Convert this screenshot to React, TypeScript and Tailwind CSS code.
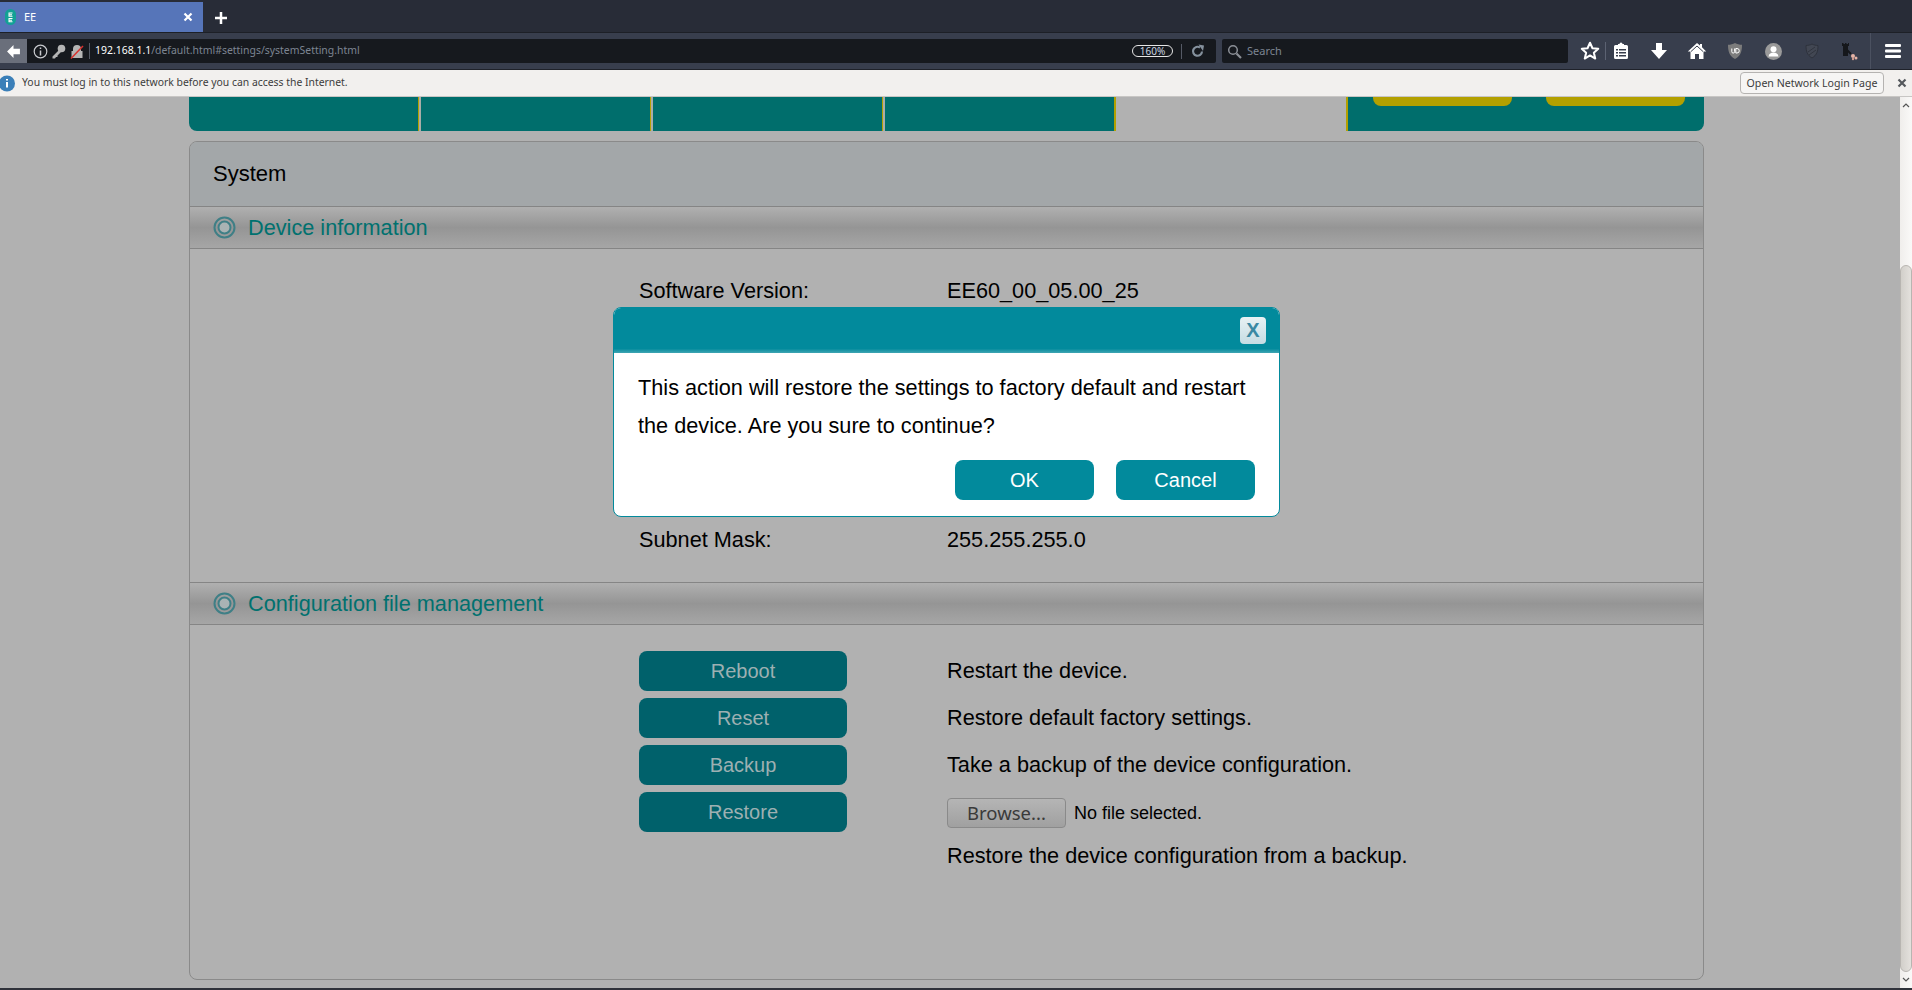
import React from "react";

const ui = { fontFamily: '"Noto Sans", "DejaVu Sans", sans-serif' };
const page = { fontFamily: '"Liberation Sans", Arial, sans-serif' };

function Ring() {
  return (
    <svg width="23" height="23" viewBox="0 0 23 23" className="shrink-0">
      <circle cx="11.5" cy="11.5" r="10" fill="none" stroke="#3f7f86" strokeWidth="2" />
      <circle cx="11.5" cy="11.5" r="6" fill="#a9b3b4" stroke="#3f7f86" strokeWidth="2" />
    </svg>
  );
}

function SectionHead({ title }: { title: string }) {
  return (
    <div className="h-[43px] flex items-center gap-[12px] pl-[23px] border-y border-[#858585] bg-[linear-gradient(180deg,#b0b0b0_0%,#959595_50%,#a6a6a6_100%)]">
      <Ring />
      <span className="pt-[1px] text-[21.7px] text-[#00716f]">{title}</span>
    </div>
  );
}

function ActionRow({ label, text }: { label: string; text: string }) {
  return (
    <div className="flex items-center h-[40px] mb-[7px]">
      <button className="w-[208px] h-[40px] rounded-lg bg-[#00616b] text-[20px] text-[#9db0b2]">{label}</button>
      <span className="ml-[100px] text-[21.7px] text-black">{text}</span>
    </div>
  );
}

function ToolbarIcons() {
  return (
    <div className="flex items-center h-full">
      <svg width="22" height="22" viewBox="0 0 24 24" className="ml-[11px]">
        <path d="M12 3l2.7 6 6.3.6-4.8 4.2 1.5 6.4L12 16.8 6.3 20.2l1.5-6.4L3 9.6 9.3 9z" fill="none" stroke="#fff" strokeWidth="2.2" strokeLinejoin="round" />
      </svg>
      <div className="w-px h-[18px] bg-[#5c6272] ml-[4px]" />
      <svg width="18" height="20" viewBox="0 0 18 20" className="ml-[6px]">
        <path d="M6 3h1.5a1.5 1.5 0 0 1 3 0H12v1h2.5A1.5 1.5 0 0 1 16 5.5v11a1.5 1.5 0 0 1-1.5 1.5h-11A1.5 1.5 0 0 1 2 16.5v-11A1.5 1.5 0 0 1 3.500 4H6z" fill="#fff" />
        <path d="M4 8h2v1.500H4zM7 8h7v1.500H7zM4 11h2v1.500H4zM7 11h7v1.500H7zM4 14h2v1.500H4zM7 14h7v1.500H7z" fill="#383e4d" />
      </svg>
      <svg width="18" height="18" viewBox="0 0 18 18" className="ml-[20px]">
        <path d="M6 1h6v7h5l-8 9-8-9h5z" fill="#fff" />
      </svg>
      <svg width="20" height="18" viewBox="0 0 20 18" className="ml-[19px]">
        <path d="M10 1L0.800 9.500h2.700V17h4.500v-5h4v5h4.500V9.500h2.700L15 5.200V2h-2v1.400z" fill="#fff" />
        <path d="M10 4l-6 5.500" stroke="#383e4d" strokeWidth="1" />
        <path d="M10 4l6 5.500" stroke="#383e4d" strokeWidth="1" />
      </svg>
      <svg width="16" height="18" viewBox="0 0 16 18" className="ml-[20px]">
        <path d="M8 1c2 1.200 4.500 1.700 7 1.800 0 6-1 11-7 14.200C2 13.800 1 8.800 1 2.800 3.500 2.700 6 2.200 8 1z" fill="#7c7c7c" />
        <path d="M4.800 6.500v3.200a1.400 1.400 0 0 0 2.800 0V6.500M8.800 6.500v4.500h1.200a2.250 2.250 0 0 0 0-4.500z" fill="none" stroke="#fff" strokeWidth="1" />
      </svg>
      <svg width="17" height="17" viewBox="0 0 17 17" className="ml-[22px]">
        <circle cx="8.500" cy="8.500" r="8.500" fill="#9a9a9a" />
        <circle cx="8.500" cy="6.200" r="3" fill="#fff" />
        <path d="M3.500 13.500c.5-3 2.500-4 5-4s4.500 1 5 4z" fill="#fff" />
      </svg>
      <svg width="14" height="16" viewBox="0 0 14 16" className="ml-[23px]">
        <path d="M7 1c1.800 1 3.800 1.400 6 1.500 0 5.500-1 9.500-6 12.500C2 12 1 8 1 2.500 3.200 2.400 5.200 2 7 1z" fill="#424753" stroke="#2e323c" strokeWidth="1" />
        <path d="M3 9l7-5M4 12l7-5" stroke="#30343e" strokeWidth="1" />
      </svg>
      <svg width="17" height="20" viewBox="0 0 17 20" className="ml-[22px]">
        <path d="M1 2h1.500v1H4V2h1.500v1H7V2h1v3H7v10H2V5H1z" fill="#15171b" />
        <path d="M6 9l4 4" stroke="#15171b" strokeWidth="2" />
        <circle cx="12" cy="15" r="2" fill="#e5b3a5" />
        <circle cx="15" cy="17" r="1.500" fill="#e5b3a5" />
        <circle cx="12" cy="18" r="1.200" fill="#cf9c90" />
      </svg>
      <div className="w-px h-full bg-[#4b5160] ml-[12px]" />
      <svg width="16" height="14" viewBox="0 0 16 14" className="ml-[14px]">
        <rect y="0" width="16" height="3" rx="1" fill="#fff" />
        <rect y="5.500" width="16" height="3" rx="1" fill="#fff" />
        <rect y="11" width="16" height="3" rx="1" fill="#fff" />
      </svg>
    </div>
  );
}

function Browser() {
  return (
    <div style={ui} className="shrink-0">
      <div className="h-[33px] bg-[#282c37] pt-[2px] flex border-b border-[#1d2027]">
        <div className="w-[203px] h-full bg-[#5675b9] flex items-center relative">
          <svg width="11" height="16" viewBox="0 0 11 16" className="ml-[5px]">
            <rect width="11" height="16" rx="5.500" fill="#12a195" />
            <path d="M3.500 3.500h4v1h-3v.7h2.500v1H4.500v.6h3v1h-4zM3.500 9h4v1h-3v.7h2.500v1H4.500v.6h3v1h-4z" fill="#fff" />
          </svg>
          <span className="ml-[8px] text-[11px] text-white">EE</span>
          <svg width="10" height="10" viewBox="0 0 10 10" className="ml-auto mr-[10px]">
            <path d="M1.500 1.500l7 7M8.500 1.500l-7 7" stroke="#fff" strokeWidth="2.200" />
          </svg>
        </div>
        <svg width="14" height="14" viewBox="0 0 14 14" className="ml-[11px] mt-[9px]">
          <path d="M7 1v12M1 7h12" stroke="#fff" strokeWidth="2.500" />
        </svg>
      </div>
      <div className="h-[37px] bg-[#383e4d] flex items-center border-b border-[#1f222a]">
        <div className="w-[27px] h-[24px] bg-[#6a6f7b] flex items-center justify-center">
          <svg width="15" height="15" viewBox="0 0 14 14">
            <path d="M7 1L1 7l6 6V9.500h6v-5H7z" fill="#fff" />
          </svg>
        </div>
        <div className="w-[1189px] h-[24px] bg-[#16191e] rounded-r-[2px] flex items-center">
          <svg width="15" height="15" viewBox="0 0 15 15" className="ml-[6px]">
            <circle cx="7.500" cy="7.500" r="6.300" fill="none" stroke="#c9cbcf" strokeWidth="1.200" />
            <path d="M7.500 6.500v5M7.500 3.500v1.600" stroke="#c9cbcf" strokeWidth="1.500" />
          </svg>
          <svg width="15" height="15" viewBox="0 0 15 15" className="ml-[3px]">
            <circle cx="10.500" cy="4.500" r="3.800" fill="#b5b5b5" />
            <path d="M8 6L1.500 12.500V14.500h2.500l1-1.500h1.500V11.500L10 8z" fill="#b5b5b5" />
          </svg>
          <svg width="14" height="15" viewBox="0 0 14 15" className="ml-[4px]">
            <path d="M3 7V5a4 4 0 0 1 8 0v2h1.500v7h-11V7z" fill="#b5b5b5" />
            <path d="M1 14.500L13 2" stroke="#d8322e" strokeWidth="1.500" />
          </svg>
          <div className="w-px h-[16px] bg-[#555a66] ml-[5px]" />
          <span className="ml-[5px] text-[10.450px] text-white whitespace-nowrap">192.168.1.1<span className="text-[#7d8592]">/default.html#settings/systemSetting.html</span></span>
          <div className="ml-auto w-[41px] h-[12px] rounded-full border border-[#e6e6e6] text-[10px] leading-[10px] text-center text-[#c7d3e0]">160%</div>
          <div className="w-px h-[15px] bg-[#555a66] ml-[8px]" />
          <svg width="14" height="14" viewBox="0 0 14 14" className="ml-[9px] mr-[11px]">
            <path d="M11 7.500A4.500 4.500 0 1 1 9 3.500" fill="none" stroke="#85919d" strokeWidth="2.200" />
            <path d="M7.500 0.500l5.500 1-1 5.500z" fill="#85919d" />
          </svg>
        </div>
        <div className="w-[346px] h-[24px] bg-[#16191e] rounded-[2px] ml-[6px] flex items-center">
          <svg width="15" height="15" viewBox="0 0 15 15" className="ml-[5px]">
            <circle cx="6" cy="6" r="4.300" fill="none" stroke="#8b8f96" strokeWidth="1.500" />
            <path d="M9.500 9.500l4.500 4.500" stroke="#8b8f96" strokeWidth="2.200" />
          </svg>
          <span className="ml-[5px] text-[11px] text-[#7d8592]">Search</span>
        </div>
        <ToolbarIcons />
      </div>
      <div className="h-[27px] bg-[#f2f0ee] border-b border-[#c8c6c4] flex items-center">
        <svg width="16" height="17" viewBox="0 0 16 16">
          <circle cx="7" cy="8" r="8" fill="#3b7fb8" />
          <path d="M7 6.500v5.500M7 3.500v1.500" stroke="#fff" strokeWidth="2" />
        </svg>
        <span className="ml-[6px] text-[10.400px] text-[#3c3c3c]">You must log in to this network before you can access the Internet.</span>
        <div className="ml-auto w-[144px] h-[22px] rounded-[4px] border border-[#b5b3b1] bg-[#f6f5f4] text-[10.600px] leading-[20px] text-center text-[#3c3c3c]">Open Network Login Page</div>
        <svg width="10" height="10" viewBox="0 0 10 10" className="ml-[13px] mr-[5px]">
          <path d="M1.500 1.500l7 7M8.500 1.500l-7 7" stroke="#55585c" strokeWidth="2.200" />
        </svg>
      </div>
    </div>
  );
}

function Nav() {
  return (
    <div className="h-[34px] flex">
      <div className="w-[230px] bg-[#006e6c] rounded-bl-lg border-r border-[#b3a000]" />
      <div className="w-[2px] bg-[#a9ada8]" />
      <div className="w-[230px] bg-[#006e6c] border-r border-[#b3a000]" />
      <div className="w-[2px] bg-[#a9ada8]" />
      <div className="w-[230px] bg-[#006e6c] border-r border-[#b3a000]" />
      <div className="w-[2px] bg-[#a9ada8]" />
      <div className="w-[231px] bg-[#006e6c] border-r-2 border-[#b3a000]" />
      <div className="w-[230px]" />
      <div className="w-[358px] bg-[#006e6c] border-l-2 border-[#b3a000] rounded-br-lg flex gap-[34px] pl-[25px]">
        <div className="w-[139px] h-[9px] bg-[#b3a000] rounded-b-lg" />
        <div className="w-[139px] h-[9px] bg-[#b3a000] rounded-b-lg" />
      </div>
    </div>
  );
}

function Panel() {
  return (
    <div className="mt-[10px] h-[839px] border border-[#8a8a8a] rounded-lg overflow-hidden">
      <div className="h-[64px] flex items-center pl-[23px] pb-[2px] bg-[#a3a7a9] text-[22px] text-black">System</div>
      <SectionHead title="Device information" />
      <div className="h-[333px] pl-[449px] pt-[28px] text-[21.7px] text-black">
        <div className="flex h-[28px] items-center">
          <span className="w-[308px]">Software Version:</span>
          <span>EE60_00_05.00_25</span>
        </div>
        <div className="h-[221px]" />
        <div className="flex h-[28px] items-center">
          <span className="w-[308px]">Subnet Mask:</span>
          <span>255.255.255.0</span>
        </div>
      </div>
      <SectionHead title="Configuration file management" />
      <div className="pl-[449px] pt-[26px]">
        <ActionRow label="Reboot" text="Restart the device." />
        <ActionRow label="Reset" text="Restore default factory settings." />
        <ActionRow label="Backup" text="Take a backup of the device configuration." />
        <div className="flex">
          <button className="w-[208px] h-[40px] rounded-lg bg-[#00616b] text-[20px] text-[#9db0b2]">Restore</button>
          <div className="ml-[100px]">
            <div className="flex items-center h-[40px] pt-[2px]">
              <div style={ui} className="w-[119px] h-[30px] rounded-[4px] border border-[#8a8a8a] bg-[linear-gradient(180deg,#b5b5b5,#a0a0a0)] text-[18.500px] leading-[28px] text-center text-[#3a3a3a]">Browse...</div>
              <span className="ml-[8px] text-[18px] text-black">No file selected.</span>
            </div>
            <div className="mt-[8px] text-[21.7px] text-black">Restore the device configuration from a backup.</div>
          </div>
        </div>
      </div>
    </div>
  );
}

function Dialog() {
  return (
    <div className="absolute left-[613px] top-[210px] w-[667px] h-[210px] rounded-lg bg-white border border-[#028a9c] overflow-hidden">
      <div className="h-[45px] bg-[linear-gradient(180deg,#028a9c_0%,#028a9c_90%,#3fa5b3_100%)] flex items-start justify-end pr-[13px] pt-[9px]">
        <div className="w-[26px] h-[27px] rounded-[4px] bg-[linear-gradient(180deg,#e8f2f4,#c5dce3)] text-[#3a89a3] font-bold text-[20px] leading-[27px] text-center">X</div>
      </div>
      <div className="pl-[24px] pr-[25px] pt-[16px] text-[21.7px] leading-[38px] text-black">
        This action will restore the settings to factory default and restart the device. Are you sure to continue?
      </div>
      <div className="flex justify-end gap-[22px] pr-[24px] mt-[15px]">
        <button className="w-[139px] h-[40px] rounded-lg bg-[#028a9c] text-white text-[20px]">OK</button>
        <button className="w-[139px] h-[40px] rounded-lg bg-[#028a9c] text-white text-[20px]">Cancel</button>
      </div>
    </div>
  );
}

function Scrollbar() {
  return (
    <div className="w-[12px] h-full bg-[linear-gradient(90deg,#f0eeec,#faf9f8)] flex flex-col items-center">
      <svg width="8" height="5" viewBox="0 0 8 5" className="mt-[6px]">
        <path d="M1 4l3-3 3 3" fill="none" stroke="#555" strokeWidth="1.200" />
      </svg>
      <div className="mt-[157px] w-full h-[707px] rounded-full border border-[#b8b5b1] bg-[linear-gradient(90deg,#d2cfca,#e4e1dd)]" />
      <svg width="8" height="5" viewBox="0 0 8 5" className="mt-[5px]">
        <path d="M1 1l3 3 3-3" fill="none" stroke="#555" strokeWidth="1.200" />
      </svg>
    </div>
  );
}

export default function App() {
  return (
    <div className="w-[1912px] h-[990px] overflow-hidden flex flex-col bg-[#b1b1b1]">
      <Browser />
      <div style={page} className="relative flex-1 flex min-h-0">
        <div className="flex-1 pl-[189px] pr-[196px]">
          <Nav />
          <Panel />
        </div>
        <Scrollbar />
        <Dialog />
      </div>
      <div className="h-[2px] bg-[#2f323a] shrink-0" />
    </div>
  );
}
